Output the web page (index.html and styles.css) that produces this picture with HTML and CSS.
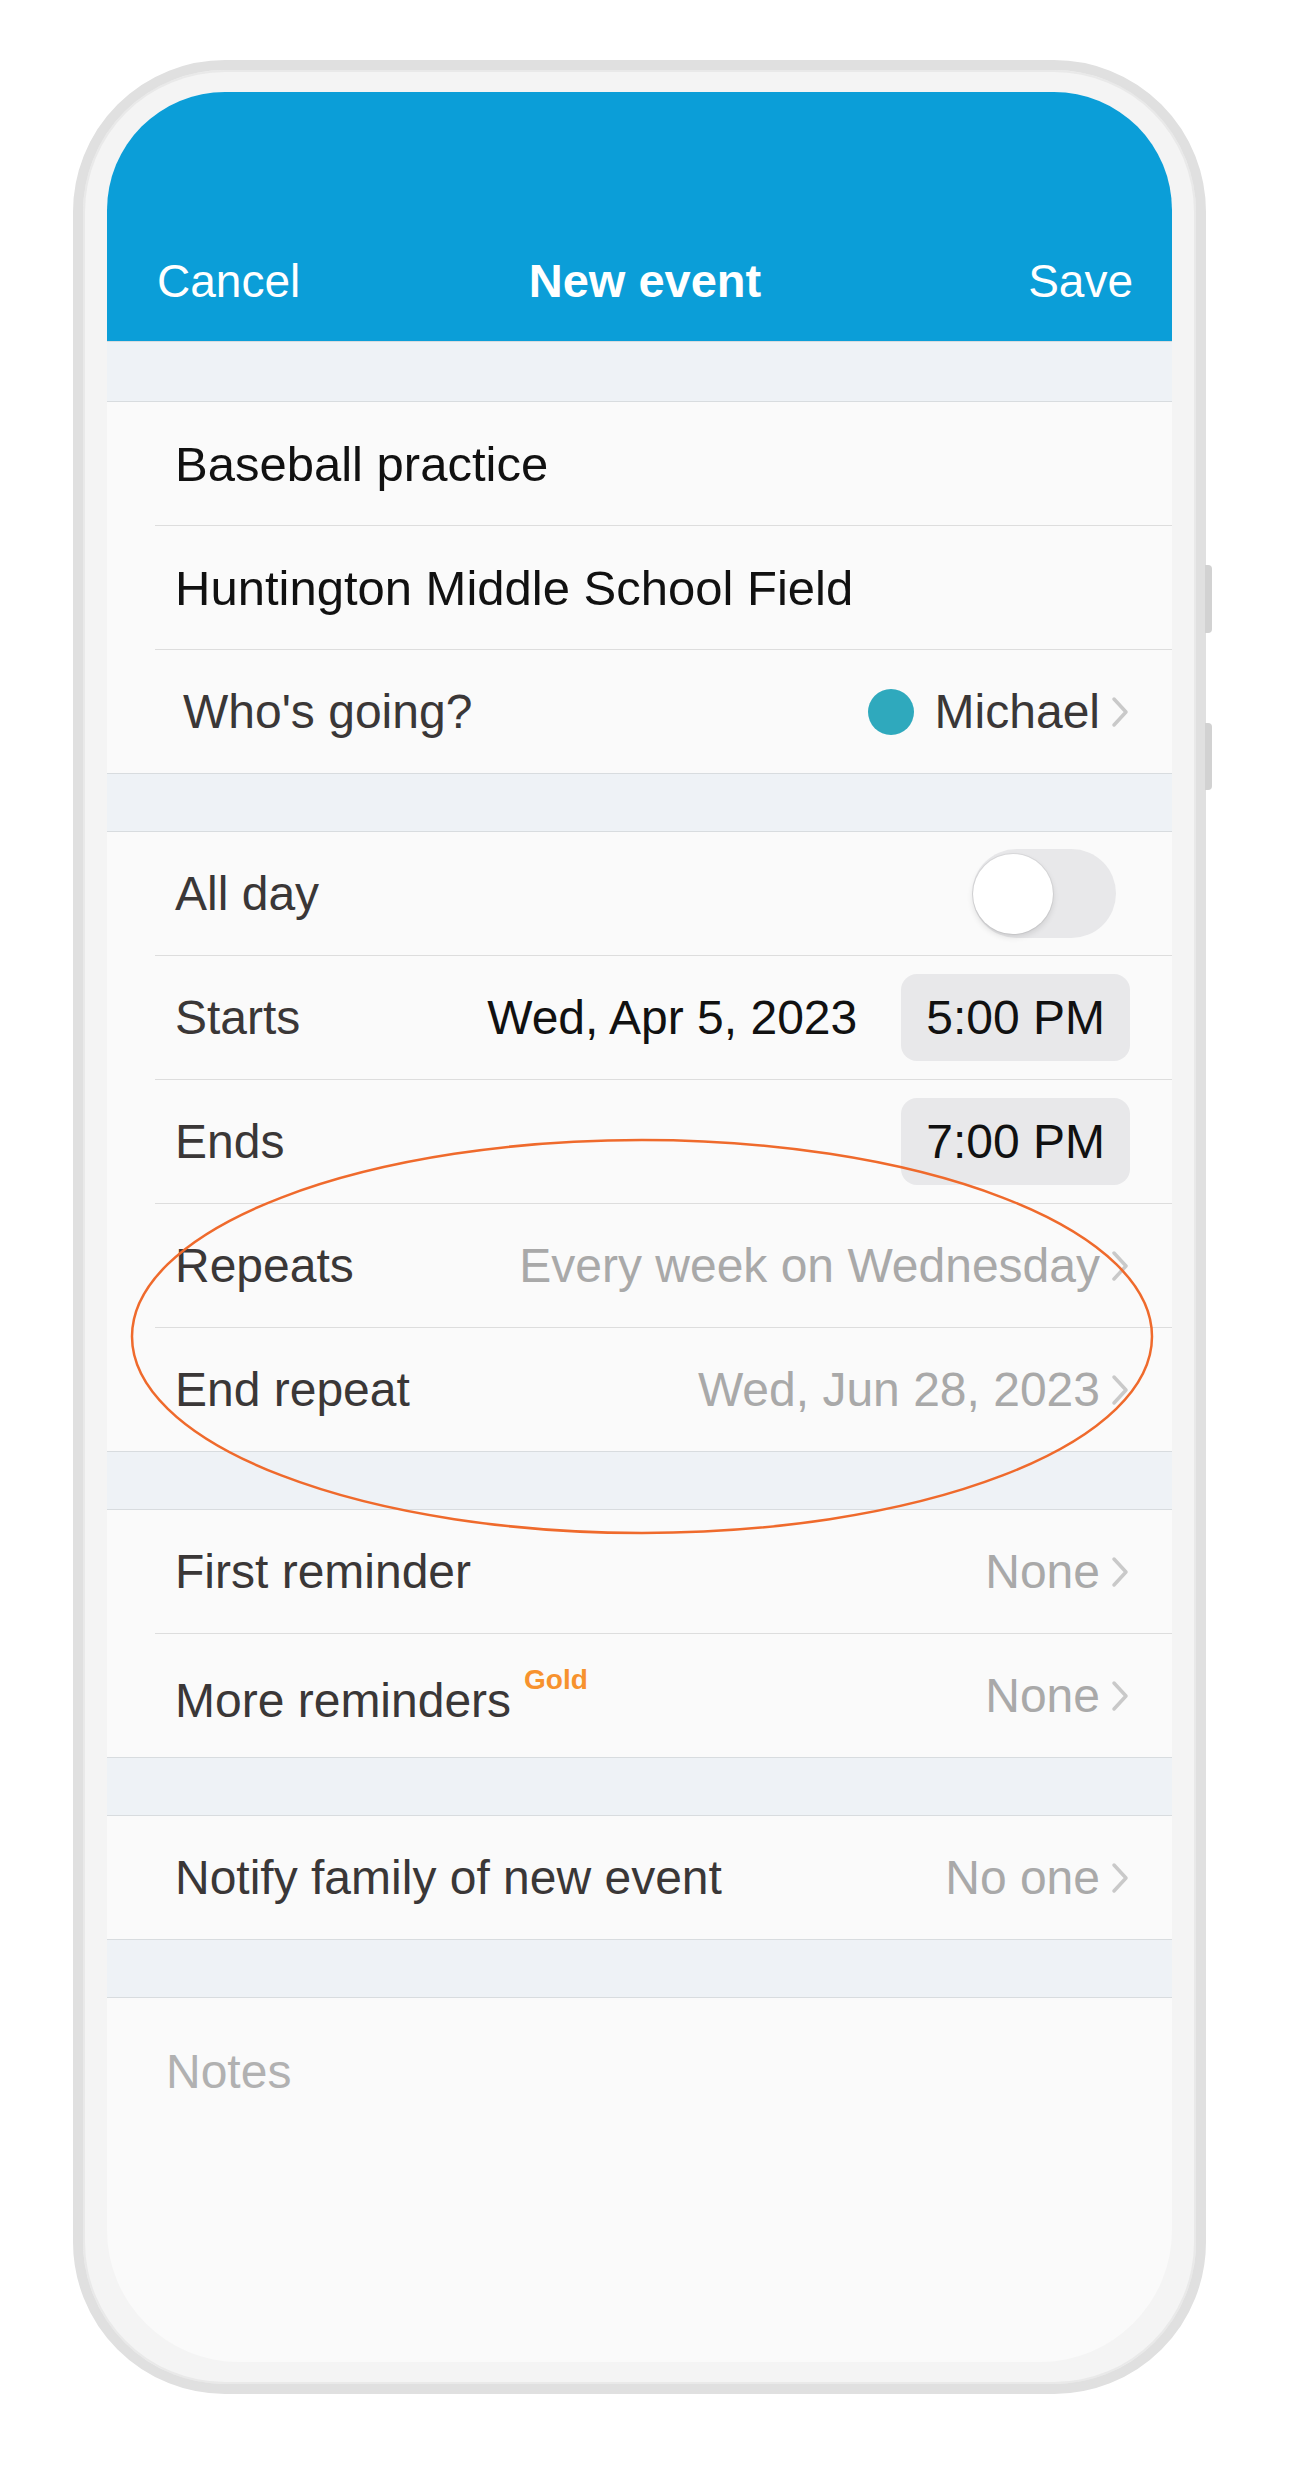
FILE: index.html
```html
<!DOCTYPE html>
<html>

<head>
    <meta charset="utf-8" />
    <title>New event</title>
    <link rel="stylesheet" href="styles.css">
</head>

<body>
    <div class="phone">
        <span class="side-btn btn-up"></span>
        <span class="side-btn btn-down"></span>
        <div class="screen">
            <div class="nav">
                <span>Cancel</span>
                <span class="nav-title">New event</span>
                <span class="nav-save">Save</span>
            </div>

            <div class="band band-first"></div>
            <div class="group">
                <div class="row"><span class="input">Baseball practice</span></div>
                <div class="row"><span class="input">Huntington Middle School Field</span></div>
                <div class="row">
                    <span class="label who">Who's going?</span>
                    <span class="dot"></span>
                    <span class="value dark">Michael</span>
                    <svg class="chev" viewBox="0 0 20 32"><path d="M4 3 L16 16 L4 29" /></svg>
                </div>
            </div>

            <div class="band"></div>
            <div class="group">
                <div class="row">
                    <span class="label">All day</span>
                    <span class="toggle"><span class="knob"></span></span>
                </div>
                <div class="row">
                    <span class="label">Starts</span>
                    <span class="date">Wed, Apr 5, 2023</span>
                    <span class="pill">5:00 PM</span>
                </div>
                <div class="row">
                    <span class="label">Ends</span>
                    <span class="pill">7:00 PM</span>
                </div>
                <div class="row">
                    <span class="label">Repeats</span>
                    <span class="value">Every week on Wednesday</span>
                    <svg class="chev" viewBox="0 0 20 32"><path d="M4 3 L16 16 L4 29" /></svg>
                </div>
                <div class="row">
                    <span class="label">End repeat</span>
                    <span class="value">Wed, Jun 28, 2023</span>
                    <svg class="chev" viewBox="0 0 20 32"><path d="M4 3 L16 16 L4 29" /></svg>
                </div>
            </div>

            <div class="band"></div>
            <div class="group">
                <div class="row">
                    <span class="label">First reminder</span>
                    <span class="value">None</span>
                    <svg class="chev" viewBox="0 0 20 32"><path d="M4 3 L16 16 L4 29" /></svg>
                </div>
                <div class="row">
                    <span class="label">More reminders<span class="gold">Gold</span></span>
                    <span class="value">None</span>
                    <svg class="chev" viewBox="0 0 20 32"><path d="M4 3 L16 16 L4 29" /></svg>
                </div>
            </div>

            <div class="band"></div>
            <div class="group">
                <div class="row">
                    <span class="label">Notify family of new event</span>
                    <span class="value">No one</span>
                    <svg class="chev" viewBox="0 0 20 32"><path d="M4 3 L16 16 L4 29" /></svg>
                </div>
            </div>

            <div class="band"></div>
            <div class="notes">Notes</div>

            <!-- annotation ring round the repeat rows -->
            <svg class="ring" viewBox="0 0 1030 400">
                <ellipse cx="512" cy="198.5" rx="510" ry="196.5" />
            </svg>
        </div>
    </div>
</body>

</html>
```

FILE: styles.css
```css
html,
body {
    margin: 0;
    padding: 0;
    background: #fff;
}

body {
    font-family: "Liberation Sans", Arial, Helvetica, sans-serif;
    padding-top: 60px;
}

.phone {
    position: relative;
    width: 1133px;
    height: 2334px;
    box-sizing: border-box;
    margin-left: 73px;
    padding: 22px 24px;
    border: 10px solid #e0e0e0;
    border-radius: 152px;
    background: #f4f4f4;
    box-shadow: inset 0 0 0 2px #e9e9e9;
}

.side-btn {
    position: absolute;
    right: -16px;
    width: 7px;
    background: #d2d2d2;
    border-radius: 0 4px 4px 0;
}

.btn-up {
    top: 495px;
    height: 68px;
}

.btn-down {
    top: 653px;
    height: 67px;
}

.screen {
    position: relative;
    height: 2270px;
    display: flex;
    flex-direction: column;
    overflow: hidden;
    background: #fafafa;
    border-radius: 118px 118px 132px 132px;
}

/* top bar */
.nav {
    flex: none;
    height: 249px;
    box-sizing: border-box;
    display: grid;
    grid-template-columns: 1fr auto 1fr;
    align-items: end;
    padding: 0 39px 37px 50px;
    background: #0b9ed8;
    color: #fff;
    font-size: 46px;
    line-height: 46px;
}

.nav-title {
    font-size: 47px;
    font-weight: bold;
}

.nav-save {
    justify-self: end;
}

/* grey gaps between groups */
.band {
    flex: none;
    height: 57px;
    background: #eef2f6;
    border-top: 1px solid #d8dcdf;
    border-bottom: 1px solid #d8dcdf;
}

.band-first {
    height: 59px;
}

.group {
    flex: none;
    padding-left: 48px;
}

.row {
    height: 123px;
    display: flex;
    align-items: center;
    padding: 0 42px 0 20px;
    font-size: 48px;
    color: #3a3737;
}

.row + .row {
    border-top: 1px solid #dddddd;
}

.input {
    font-size: 49px;
    color: #111;
}

.label {
    flex: 1;
}

.who {
    padding-left: 8px;
}

.dot {
    width: 46px;
    height: 46px;
    margin-right: 21px;
    border-radius: 50%;
    background: #2fa9bd;
}

.value {
    color: #a9a9a9;
}

.value.dark {
    color: #3a3737;
}

.chev {
    flex: none;
    width: 20px;
    height: 32px;
    margin-left: 10px;
}

.chev path {
    fill: none;
    stroke: #c9c9c9;
    stroke-width: 3.5;
    stroke-linecap: round;
    stroke-linejoin: round;
}

.toggle {
    width: 144px;
    height: 89px;
    box-sizing: border-box;
    display: flex;
    align-items: center;
    padding-left: 1px;
    margin-right: 14px;
    border-radius: 45px;
    background: #e8e8ea;
}

.knob {
    width: 80px;
    height: 80px;
    border-radius: 50%;
    background: #fff;
    box-shadow: 0 3px 6px rgba(0, 0, 0, 0.12), 0 0 0 1px rgba(0, 0, 0, 0.06);
}

.date {
    margin-right: 44px;
    color: #111;
}

.pill {
    height: 87px;
    display: flex;
    align-items: center;
    padding: 0 25px;
    border-radius: 16px;
    background: #e8e8ea;
    color: #111;
}

.gold {
    margin-left: 13px;
    font-size: 28px;
    font-weight: bold;
    color: #f7922e;
    vertical-align: 28px;
}

.notes {
    flex: 1;
    padding: 50px 0 0 59px;
    font-size: 48px;
    line-height: 48px;
    color: #b1b1b1;
}

.ring {
    position: absolute;
    left: 23px;
    top: 1046px;
    width: 1030px;
    height: 400px;
    pointer-events: none;
}

.ring ellipse {
    fill: none;
    stroke: #ef6a2c;
    stroke-width: 2.5;
}
```
